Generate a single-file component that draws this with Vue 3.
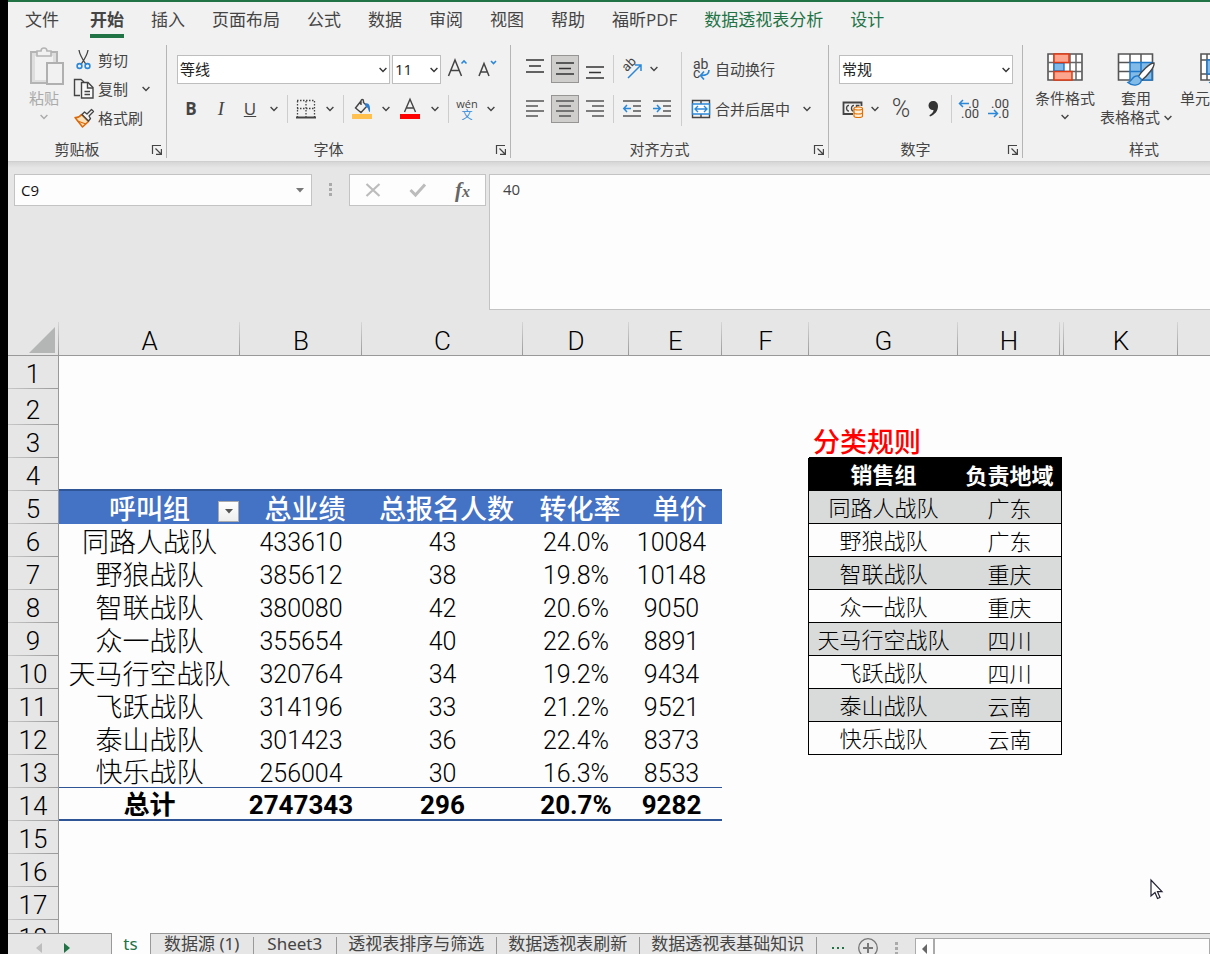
<script setup>
import { h, ref } from 'vue'

const Chevron = () =>
  h('svg', { width: 8, height: 6, viewBox: '0 0 8 6', fill: 'none', stroke: 'currentColor', 'stroke-width': 1.4 }, [
    h('path', { d: 'M.6 1 4 4.4 7.4 1' })
  ])

const Launcher = () =>
  h('svg', { width: 12, height: 12, viewBox: '0 0 12 12', fill: 'none', stroke: '#444', 'stroke-width': 1.2 }, [
    h('path', { d: 'M1.5 10V1.5H10' }),
    h('path', { d: 'M4.5 4.5 10 10M10.4 5v5.4H5' })
  ])

const menu = [
  { label: '文件' },
  { label: '开始', active: true },
  { label: '插入' },
  { label: '页面布局' },
  { label: '公式' },
  { label: '数据' },
  { label: '审阅' },
  { label: '视图' },
  { label: '帮助' },
  { label: '福昕PDF' },
  { label: '数据透视表分析', context: true },
  { label: '设计', context: true }
]

const vertical = [
  { label: '顶端对齐', d: 'M0 1h18M3 7h12M0 13h18' },
  { label: '垂直居中', d: 'M0 4h18M3 9.500h12M0 15h18', on: true },
  { label: '底端对齐', d: 'M0 8h18M3 13.500h12M0 19h18' }
]
const horizontal = [
  { label: '左对齐', d: 'M0 2h18M0 7h12M0 12h18M0 17h12' },
  { label: '居中', d: 'M0 2h18M3 7h12M0 12h18M3 17h12', on: true },
  { label: '右对齐', d: 'M0 2h18M6 7h12M0 12h18M6 17h12' }
]

const columns = ['A', 'B', 'C', 'D', 'E', 'F', 'G', 'H', '', '', 'K', '']

const teams = {
  5: ['呼叫组', '总业绩', '总报名人数', '转化率', '单价'],
  6: ['同路人战队', '433610', '43', '24.0%', '10084'],
  7: ['野狼战队', '385612', '38', '19.8%', '10148'],
  8: ['智联战队', '380080', '42', '20.6%', '9050'],
  9: ['众一战队', '355654', '40', '22.6%', '8891'],
  10: ['天马行空战队', '320764', '34', '19.2%', '9434'],
  11: ['飞跃战队', '314196', '33', '21.2%', '9521'],
  12: ['泰山战队', '301423', '36', '22.4%', '8373'],
  13: ['快乐战队', '256004', '30', '16.3%', '8533'],
  14: ['总计', '2747343', '296', '20.7%', '9282']
}
const regions = {
  3: ['分类规则', ''],
  4: ['销售组', '负责地域'],
  5: ['同路人战队', '广东'],
  6: ['野狼战队', '广东'],
  7: ['智联战队', '重庆'],
  8: ['众一战队', '重庆'],
  9: ['天马行空战队', '四川'],
  10: ['飞跃战队', '四川'],
  11: ['泰山战队', '云南'],
  12: ['快乐战队', '云南']
}
const blank = ['', '', '', '', '']
const rows = Array.from({ length: 18 }, (_, i) => {
  const n = i + 1
  return { n, left: teams[n] || blank, right: regions[n] || ['', ''] }
})

const leftClass = (n) => ({
  above: n === 4,
  head: n === 5,
  last: n === 13,
  total: n === 14
})
const rightClass = (n) => ({
  title: n === 3,
  rule: n > 4 && n < 13,
  rulehead: n === 4,
  shade: n > 4 && n < 12 && n % 2 === 1
})

const sheets = ['数据源 (1)', 'Sheet3', '透视表排序与筛选', '数据透视表刷新', '数据透视表基础知识']
const cellName = ref('C9')
const formula = ref('40')
</script>

<template>
  <div class="excel">
    <nav class="menu" aria-label="功能区">
      <a v-for="m in menu" :key="m.label" href="#" :class="{ active: m.active, context: m.context }">{{ m.label }}</a>
    </nav>

    <section class="ribbon">
      <div class="group clipboard">
        <div class="body">
          <button class="big paste" disabled>
            <svg width="36" height="40" viewBox="0 0 36 40" fill="none">
              <path d="M2 5h26v31H2z" stroke="#b4b4b4" stroke-width="2" fill="#dedede" />
              <path d="M6 9h18v24H6z" fill="#f1f1f1" />
              <path d="M8 9V4h4c0-4 6-4 6 0h4v5z" fill="#f1f1f1" stroke="#b4b4b4" stroke-width="1.6" />
              <path d="M18 16h16v21H18z" fill="#f1f1f1" stroke="#b0b0b0" stroke-width="2" />
            </svg>
            <span>粘贴</span>
            <Chevron />
          </button>
          <div class="stack">
            <button class="item">
              <svg width="22" height="22" viewBox="0 0 22 22" fill="none" stroke="#444" stroke-width="1.3">
                <path d="M6 1c.6 5 4 10 7 14.500M15 1c-.6 5-4 10-7 14.500" />
                <circle cx="6.500" cy="17" r="2.400" stroke="#2b88d8" stroke-width="1.600" />
                <circle cx="14.500" cy="17" r="2.400" stroke="#2b88d8" stroke-width="1.600" />
              </svg>剪切
            </button>
            <button class="item">
              <svg width="22" height="22" viewBox="0 0 22 22" fill="none" stroke="#444" stroke-width="1.400">
                <path d="M7 17.500H1.500V1.500H8l3 2.500" />
                <path d="M8.500 4.500h6.500l5 5v10.500H8.500z" fill="#f8f8f8" />
                <path d="M14.500 4.500v5.500H20M11.500 13.500h5.500M11.500 16.500h5.500" />
              </svg>复制<i class="mini"><Chevron /></i>
            </button>
            <button class="item">
              <svg width="22" height="22" viewBox="0 0 22 22" fill="none">
                <path d="M2 10.500c3 .4 5-1 6.500-3l7 7-6 5.500z" fill="#fbe0b8" stroke="#d9690a" stroke-width="1.500" stroke-linejoin="round" />
                <path d="M4.500 14 13 17" stroke="#d9690a" stroke-width="1.200" />
                <path d="M9 7.500 11.500 5l2.500 2 4.500-4.500 2 2L16 9l1.500 2.500-2 2.500z" fill="#f4f4f4" stroke="#444" stroke-width="1.300" stroke-linejoin="round" />
              </svg>格式刷
            </button>
          </div>
        </div>
        <div class="caption"><span>剪贴板</span><button aria-label="剪贴板设置"><Launcher /></button></div>
      </div>

      <div class="group font">
        <div class="body col">
          <div class="line">
            <span class="combo name"><select aria-label="字体"><option>等线</option></select><Chevron /></span>
            <span class="combo size"><select aria-label="字号"><option>11</option></select><Chevron /></span>
            <button class="tool" aria-label="增大字号">
              <svg width="22" height="22" viewBox="0 0 22 22" fill="none" stroke="#444" stroke-width="1.500">
                <path d="M1.500 18 8 2l6.500 16M4 12.500h8" /><path d="m14.500 5.500 2.500-2.500 2.500 2.500" stroke="#2b88d8" stroke-width="1.600" />
              </svg>
            </button>
            <button class="tool" aria-label="减小字号">
              <svg width="22" height="22" viewBox="0 0 22 22" fill="none" stroke="#444" stroke-width="1.500">
                <path d="M4 18 9 5.500 14 18M6 14h6" /><path d="m16 3 2.500 2.500L21 3" stroke="#2b88d8" stroke-width="1.600" />
              </svg>
            </button>
          </div>
          <div class="line">
            <button class="tool wide bold">B</button>
            <button class="tool wide italic">I</button>
            <button class="tool under"><u>U</u></button>
            <button class="drop" aria-label="下划线选项"><Chevron /></button>
            <hr />
            <button class="tool" aria-label="边框">
              <svg width="20" height="20" viewBox="0 0 20 20" fill="none" stroke="#444">
                <path d="M1 1.500h18M1 9.500h18M1.500 2v16M10 2v16M18.500 2v16" stroke-width="1.300" stroke-dasharray="1.500 1.500" />
                <path d="M0 18.500h20" stroke-width="2" />
              </svg>
            </button>
            <button class="drop" aria-label="边框选项"><Chevron /></button>
            <hr />
            <button class="tool" aria-label="填充颜色">
              <svg width="20" height="20" viewBox="0 0 20 20" fill="none">
                <path d="m9 2-5.500 7 5.500 4.500 6-6.500-4-4M9 6V2c0-2 2.500-2 2.500 0v2" stroke="#444" stroke-width="1.400" />
                <path d="M13 4.500c4-1 5.500 2 5 8.500-2 0-1-4.500-4-5z" fill="#2b7cd3" />
                <path d="M0 15h20v5H0z" fill="#ffc04d" />
              </svg>
            </button>
            <button class="drop" aria-label="填充颜色选项"><Chevron /></button>
            <button class="tool wide" aria-label="字体颜色">
              <svg width="20" height="20" viewBox="0 0 20 20" fill="none">
                <path d="M4.500 13 10 .2 15.500 13M6.500 9h7" stroke="#444" stroke-width="1.400" />
                <path d="M0 15h20v5H0z" fill="#f00" />
              </svg>
            </button>
            <button class="drop" aria-label="字体颜色选项"><Chevron /></button>
            <hr />
            <button class="tool pinyin"><span>wén</span><b>文</b></button>
            <button class="drop" aria-label="拼音选项"><Chevron /></button>
          </div>
        </div>
        <div class="caption"><span>字体</span><button aria-label="字体设置"><Launcher /></button></div>
      </div>

      <div class="group align">
        <div class="body">
          <div class="col">
            <div class="line">
              <button v-for="a in vertical" :key="a.label" class="tool gap" :class="{ on: a.on }" :aria-label="a.label">
                <svg width="18" height="20" viewBox="0 0 18 20" stroke="#333" stroke-width="1.500"><path :d="a.d" /></svg>
              </button>
              <hr />
              <button class="tool" aria-label="方向">
                <svg width="22" height="22" viewBox="0 0 22 22" fill="none">
                  <text class="glyph" x="-6" y="14" font-size="13" transform="rotate(-45)">ab</text>
                  <path d="M7 20 20 7M14 7h6v6" stroke="#2b88d8" stroke-width="1.500" />
                </svg>
              </button>
              <button class="drop near" aria-label="方向选项"><Chevron /></button>
            </div>
            <div class="line">
              <button v-for="a in horizontal" :key="a.label" class="tool gap" :class="{ on: a.on }" :aria-label="a.label">
                <svg width="18" height="20" viewBox="0 0 18 20" stroke="#555" stroke-width="1.500"><path :d="a.d" /></svg>
              </button>
              <hr />
              <button class="tool gap" aria-label="减少缩进">
                <svg width="18" height="20" viewBox="0 0 18 20" fill="none" stroke="#555" stroke-width="1.500">
                  <path d="M0 2h18M10 7h8M10 12h8M0 17h18" /><path d="M8 9.500H1M4 6 .8 9.500 4 13" stroke="#2b88d8" />
                </svg>
              </button>
              <button class="tool gap" aria-label="增加缩进">
                <svg width="18" height="20" viewBox="0 0 18 20" fill="none" stroke="#555" stroke-width="1.500">
                  <path d="M0 2h18M10 7h8M10 12h8M0 17h18" /><path d="M0 9.500h7M4 6l3.200 3.500L4 13" stroke="#2b88d8" />
                </svg>
              </button>
            </div>
          </div>
          <hr class="tall" />
          <div class="col">
            <button class="item row">
              <svg width="20" height="22" viewBox="0 0 20 22" fill="none">
                <text class="glyph" x="2" y="11" font-size="14">ab</text>
                <text class="glyph" x="2" y="20" font-size="14">c</text>
                <path d="M18 12c0 4-2 5.500-8 5.500M13 13.500 9.500 17.500l3.500 4" stroke="#2b88d8" stroke-width="1.700" />
              </svg>自动换行
            </button>
            <button class="item row">
              <svg width="20" height="20" viewBox="0 0 20 20" fill="none" stroke="#444" stroke-width="1.400">
                <path d="M1.500 1.500h17v17h-17zM10 1v4M10 15v4" />
                <path d="M1.500 5h17v10h-17z" fill="#fff" stroke="#2b88d8" />
                <path d="M4 10h12M7 7l-3 3 3 3M13 7l3 3-3 3" stroke="#2b88d8" />
              </svg>合并后居中<i class="mini short"><Chevron /></i>
            </button>
          </div>
        </div>
        <div class="caption"><span>对齐方式</span><button aria-label="对齐设置"><Launcher /></button></div>
      </div>

      <div class="group number">
        <div class="body col">
          <div class="line"><span class="combo format"><select aria-label="数字格式"><option>常规</option></select><Chevron /></span></div>
          <div class="line">
            <button class="tool" aria-label="会计数字格式">
              <svg width="22" height="20" viewBox="0 0 22 20" fill="none" stroke="#444" stroke-width="1.400">
                <path d="M11 15H1.500V3.500h18V7" stroke-width="1.800" />
                <path d="M7 6.500c-3-.5-3.500 5.500 0 5.500M12 6.500c-3-.5-3.500 5.500-.5 5.500M14.500 8V6.500h3" />
                <path d="M12 9.500v7.500c0 2 8.500 2 8.500 0V9.500" fill="#fff0dc" stroke="#e07000" stroke-width="1.200" />
                <ellipse cx="16.250" cy="9.500" rx="4.250" ry="1.500" fill="#fff0dc" stroke="#e07000" stroke-width="1.200" />
                <path d="M12 13.500c0 2 8.500 2 8.500 0" stroke="#e07000" stroke-width="1.200" />
              </svg>
            </button>
            <button class="drop near" aria-label="会计格式选项"><Chevron /></button>
            <button class="tool percent">%</button>
            <button class="tool" aria-label="千位分隔样式">
              <svg width="12" height="18" viewBox="0 0 12 18" fill="#333"><path d="M6 1c3 0 5 2 5 5 0 5-3 8.500-8 10.500l-.6-1.200C5 13.500 6.500 12 6.500 10 4 10.500 1.500 8.500 1.500 5.500 1.500 3 3.500 1 6 1z" /></svg>
            </button>
            <hr />
            <button class="tool gap decimal" aria-label="增加小数位数">
              <span>.0</span><span>.00</span>
              <svg width="11" height="9" viewBox="0 0 11 9" fill="none" stroke="#2b88d8" stroke-width="1.500"><path d="M11 4.500H1.500M5 1 1.500 4.500 5 8" /></svg>
            </button>
            <button class="tool gap decimal dec" aria-label="减少小数位数">
              <span>.00</span><span>.0</span>
              <svg width="11" height="9" viewBox="0 0 11 9" fill="none" stroke="#2b88d8" stroke-width="1.500"><path d="M0 4.500h9.500M6 1l3.500 3.500L6 8" /></svg>
            </button>
          </div>
        </div>
        <div class="caption"><span>数字</span><button aria-label="数字设置"><Launcher /></button></div>
      </div>

      <div class="group styles">
        <div class="body">
          <button class="big">
            <svg width="38" height="38" viewBox="0 0 38 38" fill="none">
              <path d="M2 5h34v26H2z" fill="#fff" stroke="#555" stroke-width="1.600" />
              <path d="M2 13.500h34M2 22.500h34M8 5v26M24 5v26M30 5v26" stroke="#666" stroke-width="1.500" />
              <path d="M8 14h10v8H8z" fill="#7fb9e8" stroke="#1f78c8" stroke-width="1.400" />
              <path d="M8 5h15v8.500H8zM8 22.500h18V31H8z" fill="#fca58f" stroke="#e03a14" stroke-width="1.500" />
            </svg>
            <span>条件格式</span>
            <Chevron />
          </button>
          <button class="big">
            <svg width="38" height="38" viewBox="0 0 38 38" fill="none">
              <path d="M1.500 5h34v26h-34z" fill="#fff" stroke="#555" stroke-width="1.600" />
              <path d="M13 14h22v17H13z" fill="#83bbe8" />
              <path d="M1 13.500h12M1 22.500h12M13 5v9M24 5v9" stroke="#555" stroke-width="1.500" />
              <path d="M13 31V13.500h22V31H24M13 22.500h22M24 14v17" stroke="#1f78c8" stroke-width="1.500" />
              <path d="M37 14c-4-.5-13 9-16 14l4 3c5-4 13-13 12-17z" fill="#fff" stroke="#444" stroke-width="1.400" />
              <path d="M21 27c-6-1-5 5-10 6.500 5 4.500 13 3 13.500-3z" fill="#83bbe8" stroke="#1f78c8" stroke-width="1.400" />
            </svg>
            <span>套用</span>
            <span class="second-line">表格格式 <Chevron /></span>
          </button>
          <button class="big cellstyle">
            <svg width="38" height="38" viewBox="0 0 38 38" fill="none">
              <path d="M2 5h34v26H2z" fill="#fff" stroke="#555" stroke-width="1.600" />
              <path d="M2 11h34M2 25h34M8 5v26M30 5v26" stroke="#555" stroke-width="1.500" />
              <path d="M8 11h22v14H8z" fill="#83bbe8" stroke="#1f78c8" stroke-width="1.500" />
              <path d="M37 14c-4-.5-13 9-16 14l4 3c5-4 13-13 12-17z" fill="#fff" stroke="#444" stroke-width="1.400" />
              <path d="M21 27c-6-1-5 5-10 6.500 5 4.500 13 3 13.500-3z" fill="#83bbe8" stroke="#1f78c8" stroke-width="1.400" />
            </svg>
            <span>单元格样式</span>
          </button>
        </div>
        <div class="caption"><span>样式</span></div>
      </div>
    </section>

    <section class="formulabar">
      <div class="namebox">
        <input v-model="cellName" aria-label="名称框" />
        <button aria-label="名称列表"><svg width="8" height="5" viewBox="0 0 8 5"><path d="M0 0h8L4 4.500z" fill="#777" /></svg></button>
      </div>
      <div class="grip"><i></i><i></i><i></i></div>
      <div class="actions">
        <button aria-label="取消"><svg width="16" height="16" viewBox="0 0 16 16" stroke="#bcbcbc" stroke-width="2.200"><path d="m1.500 2 13 12M14.500 2l-13 12" /></svg></button>
        <button aria-label="输入"><svg width="18" height="16" viewBox="0 0 18 16" fill="none" stroke="#bcbcbc" stroke-width="3"><path d="m1.500 8 5 5L16 2.500" /></svg></button>
        <button class="fx">f<small>x</small></button>
      </div>
      <textarea v-model="formula" aria-label="编辑栏"></textarea>
    </section>

    <main class="sheet">
      <table>
        <colgroup>
          <col class="c-n" /><col class="c-a" /><col class="c-b" /><col class="c-c" /><col class="c-d" /><col class="c-e" />
          <col class="c-f" /><col class="c-g" /><col class="c-h" /><col class="c-thin" /><col class="c-thin" /><col class="c-k" /><col />
        </colgroup>
        <thead>
          <tr>
            <th class="corner"><svg width="26" height="26" viewBox="0 0 26 26"><path d="M26 0v26H0z" fill="#b3b6b5" /></svg></th>
            <th v-for="(c, i) in columns" :key="i" scope="col" :class="{ plain: i === 8 || i === 11 }">{{ c }}</th>
          </tr>
        </thead>
        <tbody>
          <tr v-for="r in rows" :key="r.n" :class="{ second: r.n === 2 }">
            <th scope="row">{{ r.n }}</th>
            <td v-for="(v, i) in r.left" :key="i" :class="[leftClass(r.n), 'k' + i]">
              {{ v }}
              <button v-if="r.n === 5 && i === 0" class="filter" aria-label="筛选呼叫组">
                <svg width="8" height="5" viewBox="0 0 8 5"><path d="M0 0h8L4 4.500z" fill="#555" /></svg>
              </button>
            </td>
            <td :class="{ edge: r.n > 3 && r.n < 13 }"></td>
            <td class="g" :class="rightClass(r.n)">{{ r.right[0] }}</td>
            <td class="h" :class="rightClass(r.n)" colspan="2">{{ r.right[1] }}</td>
            <td></td>
            <td></td>
            <td></td>
          </tr>
        </tbody>
      </table>
    </main>

    <footer class="tabs">
      <div class="arrows">
        <button aria-label="上一个"><svg width="6" height="10" viewBox="0 0 6 10"><path d="M6 0v10L0 5z" fill="#bdbdbd" /></svg></button>
        <button aria-label="下一个"><svg width="6" height="10" viewBox="0 0 6 10"><path d="M0 0v10l6-5z" fill="#217346" /></svg></button>
      </div>
      <button class="current">ts</button>
      <div class="rest">
        <button v-for="s in sheets" :key="s" class="tab">{{ s }}</button>
        <button class="more" aria-label="更多工作表"><i></i><i></i><i></i></button>
        <button class="add" aria-label="新工作表">
          <svg width="20" height="20" viewBox="0 0 20 20" fill="none" stroke="#777"><circle cx="10" cy="10" r="9.300" stroke-width="1.300" /><path d="M10 5v10M5 10h10" stroke-width="2" /></svg>
        </button>
        <div class="grip"><i></i><i></i><i></i></div>
        <div class="scroll">
          <button aria-label="向左滚动"><svg width="5" height="10" viewBox="0 0 5 10"><path d="M5 0v10L0 5z" fill="#666" /></svg></button>
        </div>
      </div>
    </footer>

    <svg class="pointer" width="14" height="21" viewBox="0 0 14 21"><path d="M1 1v16l4-3.500 2.500 6 2.500-1-2.500-5.800H12z" fill="#fff" stroke="#223" stroke-width="1.200" /></svg>
  </div>
</template>

<style>
body {
  margin: 0;
  overflow: hidden;
}
</style>

<style scoped>
* {
  box-sizing: border-box;
}
.excel {
  position: relative;
  display: flex;
  flex-direction: column;
  height: 100vh;
  overflow: hidden;
  border-left: 8px solid #000;
  background: #e6e6e6;
  color: #444;
  font: 15px/20px "Open Sans", "Noto Sans CJK SC", sans-serif;
}
button {
  display: flex;
  align-items: center;
  justify-content: center;
  margin: 0;
  padding: 0;
  border: 0;
  background: none;
  color: inherit;
  font: inherit;
  white-space: nowrap;
}
svg {
  flex: none;
  overflow: visible;
}
hr {
  flex: none;
  width: 1px;
  height: 28px;
  margin: 0 4px;
  border: 0;
  background: #cdcdcd;
}
i {
  font-style: normal;
}
.glyph {
  fill: #444;
  font-family: Roboto, sans-serif;
}

.menu {
  display: flex;
  flex: none;
  gap: 27px;
  height: 43px;
  padding-left: 17px;
  border-top: 2px solid #217346;
  background: #f1f1f1;
  font-size: 17px;
  line-height: 36px;
}
.menu a {
  height: 36px;
  color: #444;
  text-decoration: none;
  white-space: nowrap;
}
.menu .active {
  margin-left: 4px;
  border-bottom: 4px solid #217346;
  font-weight: 700;
}
.menu .context {
  color: #217346;
}

.ribbon {
  display: flex;
  flex: none;
  height: 119px;
  padding: 2px 0 3px;
  border-bottom: 1px solid #cfcfcf;
  background: #f1f1f1;
}
.group {
  display: flex;
  flex: none;
  flex-direction: column;
  border-right: 1px solid #b5b5b5;
}
.clipboard { width: 159px; }
.font { width: 344px; }
.align { width: 318px; }
.number { width: 194px; }
.styles { width: 243px; }
.body {
  display: flex;
  flex: 1;
}
.col {
  display: flex;
  flex-direction: column;
  gap: 12px;
  padding-top: 10px;
}
.font .body { padding-left: 9px; }
.align .body { padding-left: 10px; }
.number .body { padding-left: 10px; }
.line {
  display: flex;
  align-items: center;
  height: 28px;
}
.caption {
  display: flex;
  height: 18px;
  align-items: center;
}
.caption span {
  flex: 1;
  text-align: center;
}
.caption button {
  justify-content: flex-end;
  width: 20px;
  height: 16px;
  padding: 2px 3px 0 0;
}
.big {
  flex-direction: column;
  justify-content: flex-start;
  line-height: 19px;
}
.big > svg + span {
  margin-top: 3px;
}
.big > svg:last-child {
  margin-top: 6px;
}
.paste {
  width: 56px;
  margin-left: 8px;
  padding-top: 1px;
  color: #aaa;
}
.paste > svg:first-child {
  margin: 1px 0 0 5px;
}
.paste > svg + span {
  margin-top: 2px;
}
.stack {
  padding: 0 0 0 1px;
}
.item {
  gap: 3px;
  height: 30px;
}
.stack .item {
  height: 29px;
}
.mini {
  display: flex;
  width: 30px;
  justify-content: center;
}
.mini.short {
  width: 26px;
}
.combo {
  position: relative;
  height: 29px;
}
.combo select {
  width: 100%;
  height: 100%;
  padding: 0 2px;
  border: 1px solid #bebebe;
  border-radius: 0;
  appearance: none;
  background: #fff;
  color: #222;
  font: inherit;
}
.combo svg {
  position: absolute;
  top: 12px;
  right: 3px;
  color: #333;
}
.name {
  width: 213px;
  margin: 0 2px 0 1px;
}
.size {
  width: 49px;
  margin-right: 3px;
}
.format { width: 174px; }
.tool {
  flex: none;
  width: 28px;
  height: 28px;
}
.wide { width: 30px; }
.gap { margin-right: 2px; }
.gap + hr { margin-left: 2px; }
.on {
  border: 1px solid #979593;
  background: #d0cecc;
}
.drop {
  width: 19px;
  height: 28px;
}
.near { width: 16px; }
.bold {
  font-size: 17px;
  font-weight: 700;
}
.italic {
  font: italic 19px/28px "Liberation Serif", serif;
}
.under {
  font-size: 17px;
}
.pinyin {
  flex-direction: column;
  font-size: 11px;
  line-height: 11px;
}
.pinyin b {
  color: #2b88d8;
  font-weight: 400;
}
.tall {
  height: 74px;
  margin: 7px 9px 0 3px;
}
.row {
  justify-content: flex-start;
  gap: 4px;
  height: 28px;
}
.percent {
  width: 36px;
  font: 300 25px/28px Roboto, sans-serif;
}
.decimal {
  position: relative;
  flex-direction: column;
  align-items: flex-end;
  padding-right: 5px;
  font: 13px/10px Roboto, sans-serif;
}
.decimal svg {
  position: absolute;
  top: 4px;
  left: 2px;
}
.dec svg {
  top: 14px;
}
.styles .body {
  gap: 5px;
  padding: 4px 0 0 12px;
}
.styles .big > svg + span {
  margin-top: 2px;
}
.second-line {
  display: flex;
  gap: 4px;
  align-items: center;
}
.cellstyle {
  padding-left: 3px;
}

.formulabar {
  display: flex;
  flex: none;
  height: 160px;
  padding-top: 12px;
  background: linear-gradient(#d6d6d6, #e6e6e6 6px);
}
.namebox,
.actions {
  display: flex;
  flex: none;
  height: 32px;
  border: 1px solid #c3c3c3;
  background: #fdfdfd;
}
.namebox {
  width: 298px;
  margin-left: 6px;
}
.namebox input {
  flex: 1;
  min-width: 0;
  padding: 0 6px;
  border: 0;
  background: none;
  color: #111;
  font: inherit;
}
.namebox button {
  width: 22px;
}
.grip {
  display: flex;
  flex: none;
  flex-direction: column;
  justify-content: center;
  align-items: center;
  gap: 2px;
  width: 37px;
  height: 31px;
}
.grip i,
.more i {
  width: 3px;
  height: 3px;
  background: #aaa;
}
.actions {
  width: 137px;
}
.actions button {
  flex: 1;
}
.fx {
  color: #666;
  font: italic 700 21px/28px "Liberation Serif", serif;
}
.fx small {
  padding-top: 4px;
  font-size: 16px;
}
.formulabar textarea {
  flex: 1;
  min-width: 0;
  height: 136px;
  margin-left: 3px;
  padding: 4px 13px;
  border: 1px solid #c3c3c3;
  border-right: 0;
  outline: 0;
  resize: none;
  background: #fdfdfd;
  color: #444;
  font: inherit;
}

.sheet {
  flex: 1;
  min-height: 0;
  overflow: hidden;
  background: #fdfdfd;
}
table {
  width: 100%;
  border-spacing: 0;
  table-layout: fixed;
  color: #000;
}
.c-n { width: 51px; }
.c-a { width: 181px; }
.c-b { width: 122px; }
.c-c { width: 161px; }
.c-d { width: 106px; }
.c-e { width: 93px; }
.c-f { width: 87px; }
.c-g { width: 149px; }
.c-h { width: 102px; }
.c-thin { width: 2px; }
.c-k { width: 114px; }
th {
  padding: 0;
  background: #e6e6e6;
  font: 300 26px/28px Roboto, sans-serif;
}
thead th {
  height: 34px;
  padding-top: 5px;
  border-bottom: 1px solid #999;
  background: linear-gradient(#d6d6d6, #999) right / 1px 100% no-repeat #e6e6e6;
}
thead .plain {
  background: #e6e6e6;
}
thead .corner {
  padding-top: 2px;
}
.corner svg {
  display: block;
  margin: 0 4px 0 auto;
}
tbody th {
  height: 33px;
  padding-top: 2px;
  border-right: 1px solid #999;
  background: linear-gradient(90deg, #c8c8c8, #999) bottom / 100% 1px no-repeat #e6e6e6;
}
tbody tr {
  height: 33px;
}
tbody .second {
  height: 36px;
}
.second th {
  padding-top: 5px;
}
td {
  position: relative;
  padding: 3px 0 0;
  font: 300 25px/27px Roboto, "Noto Sans CJK SC", sans-serif;
  text-align: center;
  white-space: nowrap;
}
.k0 {
  padding-top: 5px;
  font-size: 27px;
}
.k4 {
  padding-right: 8px;
}
.above {
  border-bottom: 2px solid #2f5597;
}
.above.k0 {
  padding-top: 0;
}
.head {
  padding: 5px 0 0 8px;
  background: #4472c4;
  color: #fff;
  font-size: 27px;
  font-weight: 500;
}
.head.k0 {
  padding-left: 0;
}
.last {
  padding-top: 5px;
  border-bottom: 1px solid #2f5597;
}
.total {
  padding-top: 4px;
  border-bottom: 2px solid #2f5597;
  font-size: 26px;
  font-weight: 700;
}
.filter {
  position: absolute;
  right: 1px;
  bottom: 2px;
  width: 21px;
  height: 21px;
  border: 1px solid #aaa;
  background: linear-gradient(#fff, #eee);
}
.edge {
  border-right: 1px solid #000;
}
.title {
  padding-top: 5px;
  border-bottom: 1px solid #000;
  color: #f00;
  font-size: 27px;
  font-weight: 500;
}
.title.g {
  padding-left: 4px;
  text-align: left;
}
.rulehead,
.rule {
  border-bottom: 1px solid #000;
  font-size: 22px;
}
.rulehead {
  background: #000;
  color: #fff;
  font-weight: 700;
}
.rule.h,
.rulehead.h {
  padding-top: 5px;
  border-right: 1px solid #000;
}
.shade {
  background: #d9dbda;
}

.tabs {
  display: flex;
  flex: none;
  height: 21px;
  overflow: hidden;
  background: #fdfdfd;
  font: 17px/20px "Noto Sans", "Noto Sans CJK SC", sans-serif;
}
.arrows {
  display: flex;
  gap: 22px;
  width: 104px;
  height: 28px;
  padding-left: 28px;
  border-top: 1px solid #999;
  border-right: 1px solid #999;
  background: #e6e6e6;
}
.current {
  width: 37px;
  height: 22px;
  color: #217346;
}
.rest {
  display: flex;
  flex: 1;
  height: 28px;
  margin-left: 1px;
  border-top: 1px solid #999;
  border-left: 1px solid #999;
  background: #e6e6e6;
}
.tab {
  align-items: flex-start;
  height: 22px;
  margin-top: 3px;
  padding: 0 12px 0 11px;
  border-right: 1px solid #999;
  line-height: 14px;
}
.tab:nth-child(-n + 2) {
  padding: 0 14px 0 13px;
}
.more {
  gap: 3px;
  width: 41px;
}
.more i {
  width: 2px;
  height: 2px;
  background: #217346;
}
.tabs .grip {
  height: 28px;
}
.scroll {
  flex: 1;
  margin-top: 4px;
  border: 1px solid #aaa;
  background: #fdfdfd;
}
.scroll button {
  width: 19px;
  height: 19px;
  border-right: 2px solid #aaa;
}
.pointer {
  position: absolute;
  top: 879px;
  left: 1142px;
}
</style>
